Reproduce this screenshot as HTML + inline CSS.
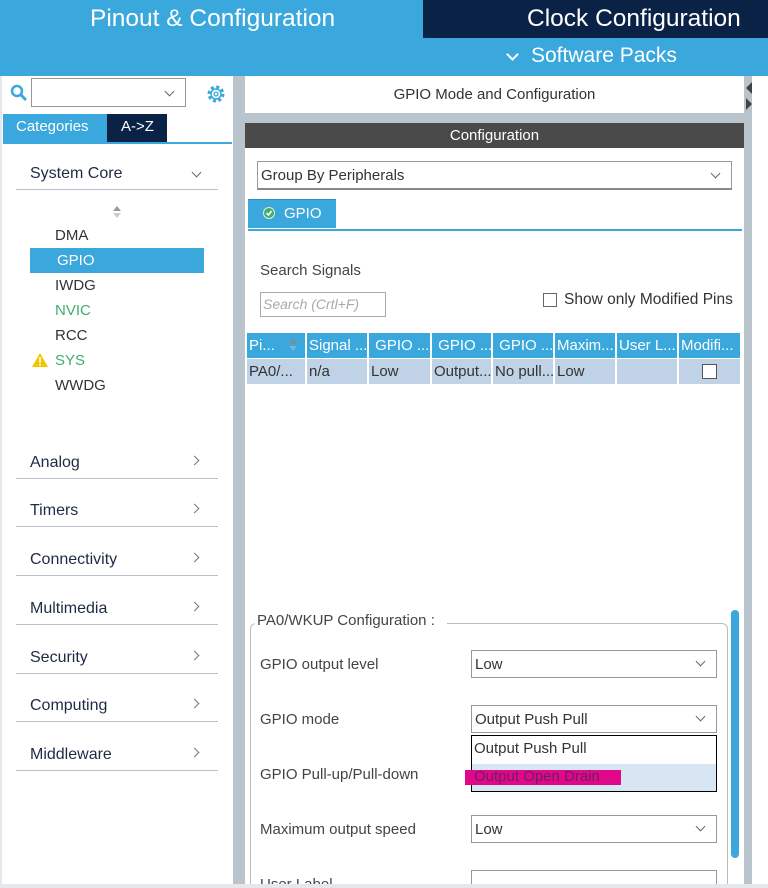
<!DOCTYPE html>
<html style="width:768px;height:888px;overflow:hidden"><head><style>
*{margin:0;padding:0;box-sizing:border-box}
body{width:768px;height:888px;overflow:hidden;background:#fff;font-family:"Liberation Sans",sans-serif;position:relative;color:#333}
.a{position:absolute}
.t{white-space:nowrap}
.chev{position:absolute;width:7px;height:7px;border-right:1.3px solid #666;border-bottom:1.3px solid #666;transform:rotate(45deg)}
.chr{position:absolute;width:7px;height:7px;border-right:1.3px solid #777;border-bottom:1.3px solid #777;transform:rotate(-45deg)}
.cat{position:absolute;left:16px;width:202px;height:34px;border-bottom:1px solid #b9c2c9;font-size:16px;color:#1f2a44}
.cat span{position:absolute;left:14px;bottom:6px}
.cat i{right:20px;bottom:14px}
.th{position:absolute;top:333px;height:25px;background:#3aa8dc;color:#fff;font-size:15px;padding:4px 0 0 2px;border-right:2px solid #fff;white-space:nowrap;overflow:hidden}
.td{position:absolute;top:359px;height:25px;background:#c0d3e6;font-size:15px;padding:4px 0 0 2px;border-right:2px solid #fff;white-space:nowrap;overflow:hidden}
.sel{position:absolute;left:471px;width:246px;height:28px;border:1px solid #999;background:#fff;font-size:15px;padding:5px 0 0 3px}
.lab{position:absolute;left:260px;font-size:15px;color:#444}
</style></head><body>
<div class="a" style="left:0;top:0;width:768px;height:76px;background:#3aa8dc"></div>
<div class="a" style="left:423px;top:0;width:345px;height:38px;background:#0b2247"></div>
<div class="a t" style="left:90px;top:5px;font-size:24.5px;color:#fff">Pinout &amp; Configuration</div>
<div class="a t" style="left:527px;top:5px;font-size:24.5px;color:#fff">Clock Configuration</div>
<div class="a" style="left:508px;top:50px;width:9px;height:9px;border-right:2.5px solid #fff;border-bottom:2.5px solid #fff;transform:rotate(45deg)"></div>
<div class="a t" style="left:531px;top:44px;font-size:21px;color:#fff">Software Packs</div>
<div class="a" style="left:233px;top:76px;width:12px;height:812px;background:#b9c4cc"></div>
<div class="a" style="left:744px;top:76px;width:8px;height:812px;background:#b9c4cc"></div>
<div class="a" style="left:746px;top:82px;width:0;height:0;border-top:6px solid transparent;border-bottom:6px solid transparent;border-right:6px solid #444"></div>
<div class="a" style="left:746px;top:98px;width:0;height:0;border-top:6px solid transparent;border-bottom:6px solid transparent;border-left:6px solid #444"></div>
<div class="a" style="left:0;top:76px;width:2px;height:812px;background:#e4e8eb"></div>
<svg class="a" style="left:10px;top:84px" width="18" height="18"><circle cx="7" cy="7" r="5" fill="none" stroke="#3aa8dc" stroke-width="2.5"/><path d="M11 11 L16 16" stroke="#3aa8dc" stroke-width="3"/></svg>
<div class="a" style="left:31px;top:78px;width:155px;height:29px;border:1px solid #999"></div>
<div class="chev" style="left:166px;top:88px"></div>
<svg class="a" style="left:205px;top:83px" width="22" height="22"><circle cx="11" cy="11" r="7" fill="none" stroke="#3aa8dc" stroke-width="3" stroke-dasharray="3 2.5"/><circle cx="11" cy="11" r="5" fill="none" stroke="#3aa8dc" stroke-width="1.5"/><circle cx="11" cy="11" r="2" fill="none" stroke="#3aa8dc" stroke-width="1.3"/></svg>
<div class="a" style="left:3px;top:114px;width:104px;height:28px;background:#3aa8dc;color:#fff;font-size:15px;padding:4px 0 0 13px">Categories</div>
<div class="a" style="left:107px;top:114px;width:60px;height:28px;background:#0b2247;color:#fff;font-size:15px;padding:4px 0 0 14px">A-&gt;Z</div>
<div class="a" style="left:3px;top:142px;width:229px;height:2px;background:#3aa8dc"></div>
<div class="cat" style="top:156px"><span>System Core</span><i class="chev" style="bottom:13px;right:18px"></i></div>
<div class="a" style="left:113px;top:206px;border-left:4px solid transparent;border-right:4px solid transparent;border-bottom:5px solid #999"></div>
<div class="a" style="left:113px;top:213px;border-left:4px solid transparent;border-right:4px solid transparent;border-top:5px solid #ccc"></div>
<div class="a" style="left:30px;top:248px;width:174px;height:25px;background:#3aa8dc"></div>
<div class="a t" style="left:55px;top:223px;font-size:15px;line-height:25px;color:#333">DMA<br><span style="color:#fff;margin-left:2px">GPIO</span><br>IWDG<br><span style="color:#3fae6f">NVIC</span><br>RCC<br><span style="color:#3fae6f">SYS</span><br>WWDG</div>
<svg class="a" style="left:31px;top:352px" width="18" height="16"><path d="M9 1 L17 15 L1 15 Z" fill="#f5c400"/><rect x="8.2" y="5" width="1.6" height="6" fill="#fff"/><rect x="8.2" y="12" width="1.6" height="1.6" fill="#fff"/></svg>
<div class="cat" style="top:445px"><span>Analog</span><i class="chr"></i></div>
<div class="cat" style="top:493px"><span>Timers</span><i class="chr"></i></div>
<div class="cat" style="top:542px"><span>Connectivity</span><i class="chr"></i></div>
<div class="cat" style="top:591px"><span>Multimedia</span><i class="chr"></i></div>
<div class="cat" style="top:640px"><span>Security</span><i class="chr"></i></div>
<div class="cat" style="top:688px"><span>Computing</span><i class="chr"></i></div>
<div class="cat" style="top:737px"><span>Middleware</span><i class="chr"></i></div>
<div class="a t" style="left:245px;top:86px;width:499px;text-align:center;font-size:15px;color:#333">GPIO Mode and Configuration</div>
<div class="a" style="left:245px;top:113px;width:499px;height:10px;background:#b9c4cc"></div>
<div class="a" style="left:245px;top:123px;width:499px;height:25px;background:#4a4a4a;color:#fff;font-size:15px;text-align:center;padding-top:4px">Configuration</div>
<div class="a" style="left:257px;top:161px;width:475px;height:29px;border:1px solid #999;border-bottom:2px solid #888;font-size:15px;padding:5px 0 0 3px">Group By Peripherals</div>
<div class="chev" style="left:712px;top:170px"></div>
<div class="a" style="left:248px;top:199px;width:88px;height:29px;background:#3aa8dc;border-top:1px solid #2a90c8"></div>
<svg class="a" style="left:262px;top:206px" width="14" height="14"><circle cx="7" cy="7" r="6" fill="#d9f0dd"/><circle cx="7" cy="7" r="5" fill="#3fae6f"/><path d="M4.5 7 L6.5 9 L9.5 5" stroke="#fff" stroke-width="1.6" fill="none"/></svg>
<div class="a t" style="left:284px;top:205px;font-size:15px;color:#fff">GPIO</div>
<div class="a" style="left:248px;top:229px;width:494px;height:2px;background:#3aa8dc"></div>
<div class="a t" style="left:260px;top:262px;font-size:15px;color:#444">Search Signals</div>
<div class="a t" style="left:260px;top:292px;width:126px;height:25px;border:1px solid #aaa;font-size:14px;font-style:italic;color:#aaa;padding:3px 0 0 2px">Search (Crtl+F)</div>
<div class="a" style="left:543px;top:293px;width:14px;height:14px;border:1px solid #666"></div>
<div class="a t" style="left:564px;top:291px;font-size:15.5px;color:#333">Show only Modified Pins</div>
<div class="th" style="left:247px;width:60px">Pi...</div>
<div class="a" style="left:289px;top:339px;border-left:4px solid transparent;border-right:4px solid transparent;border-bottom:5px solid #888"></div>
<div class="a" style="left:289px;top:346px;border-left:4px solid transparent;border-right:4px solid transparent;border-top:5px solid #6bb9e4"></div>
<div class="th" style="left:307px;width:62px">Signal ...</div>
<div class="th" style="left:369px;width:63px">&nbsp;GPIO ...</div>
<div class="th" style="left:432px;width:61px">&nbsp;GPIO ...</div>
<div class="th" style="left:493px;width:62px">&nbsp;GPIO ...</div>
<div class="th" style="left:555px;width:62px">Maxim...</div>
<div class="th" style="left:617px;width:62px">User L...</div>
<div class="th" style="left:679px;width:61px;border-right:0">Modifi...</div>
<div class="td" style="left:247px;width:60px">PA0/...</div>
<div class="td" style="left:307px;width:62px">n/a</div>
<div class="td" style="left:369px;width:63px">Low</div>
<div class="td" style="left:432px;width:61px">Output...</div>
<div class="td" style="left:493px;width:62px">No pull...</div>
<div class="td" style="left:555px;width:62px">Low</div>
<div class="td" style="left:617px;width:62px"></div>
<div class="td" style="left:679px;width:61px;border-right:0"></div>
<div class="a" style="left:702px;top:364px;width:15px;height:15px;border:1px solid #555;background:#fff"></div>
<div class="a" style="left:250px;top:623px;width:478px;height:270px;border:1px solid #bbb;border-radius:6px"></div>
<div class="a t" style="left:255px;top:612px;background:#fff;padding:0 12px 0 2px;font-size:15px;color:#444">PA0/WKUP Configuration :</div>
<div class="a" style="left:731px;top:610px;width:8px;height:248px;background:#3aa8dc;border-radius:4px"></div>
<div class="lab" style="top:656px">GPIO output level</div>
<div class="sel" style="top:650px">Low</div><div class="chev" style="left:697px;top:658px"></div>
<div class="lab" style="top:711px">GPIO mode</div>
<div class="sel" style="top:705px">Output Push Pull</div><div class="chev" style="left:697px;top:713px"></div>
<div class="a" style="left:471px;top:735px;width:246px;height:57px;border:1px solid #000;background:#fff"></div>
<div class="a" style="left:472px;top:764px;width:244px;height:27px;background:#d8e6f3"></div>
<div class="a" style="left:465px;top:770px;width:156px;height:15px;background:#e0078a"></div>
<div class="a t" style="left:474px;top:740px;font-size:15px">Output Push Pull</div>
<div class="a t" style="left:474px;top:768px;font-size:15px;color:#6a2060">Output Open Drain</div>
<div class="lab" style="top:766px">GPIO Pull-up/Pull-down</div>
<div class="lab" style="top:821px">Maximum output speed</div>
<div class="sel" style="top:815px">Low</div><div class="chev" style="left:697px;top:823px"></div>
<div class="lab" style="top:876px">User Label</div>
<div class="sel" style="top:870px;height:14px;border-bottom:0"></div>
<div class="a" style="left:0;top:884px;width:768px;height:4px;background:#e4e8eb"></div>
</body></html>
